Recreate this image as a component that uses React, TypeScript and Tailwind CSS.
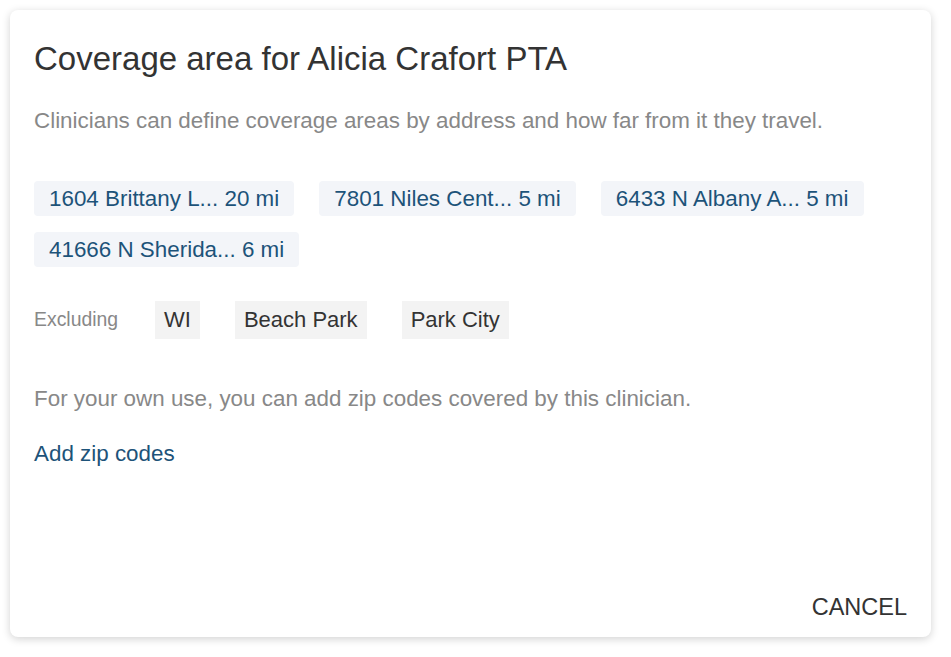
import React from "react";

const areas = [
  "1604 Brittany L... 20 mi",
  "7801 Niles Cent... 5 mi",
  "6433 N Albany A... 5 mi",
  "41666 N Sherida... 6 mi",
];

const excluded = ["WI", "Beach Park", "Park City"];

export default function App() {
  return (
    <div className="bg-white p-[10px] font-['Liberation_Sans',Arial,sans-serif]">
      <div className="flex h-[627px] w-[921px] flex-col rounded-lg bg-white px-6 shadow-[0_2px_8px_rgba(0,0,0,0.18)]">
        {/* Header */}
        <h2 className="mt-[30px] text-[33px] leading-[38px] text-[#333]">
          Coverage area for Alicia Crafort PTA
        </h2>
        <p className="mt-[29px] text-[22.4px] leading-[28px] text-[#888]">
          Clinicians can define coverage areas by address and how far from it they travel.
        </p>

        {/* Areas */}
        <div className="mt-[46px] flex w-[860px] flex-wrap gap-x-[25px] gap-y-[16px]">
          {areas.map((a) => (
            <span
              key={a}
              className="h-[35px] rounded-[4px] bg-[#f3f5f9] px-[15px] text-[22.4px] leading-[35px] text-[#1d5379]"
            >
              {a}
            </span>
          ))}
        </div>

        {/* Excluded */}
        <div className="mt-[34px] flex items-center">
          <span className="w-[121px] text-[19.4px] text-[#888]">Excluding</span>
          <div className="flex gap-[35px]">
            {excluded.map((e) => (
              <span
                key={e}
                className="h-[38px] bg-[#f3f3f3] px-[9px] text-[22px] leading-[38px] text-[#333]"
              >
                {e}
              </span>
            ))}
          </div>
        </div>

        <p className="mt-[46px] text-[22.4px] leading-[28px] text-[#888]">
          For your own use, you can add zip codes covered by this clinician.
        </p>
        <a className="mt-[27px] text-[22.4px] leading-[28px] text-[#1d5379]">Add zip codes</a>

        {/* Actions */}
        <div className="mt-auto mb-[16px] flex justify-end">
          <button className="text-[23.5px] leading-[28px] uppercase text-[#333]">Cancel</button>
        </div>
      </div>
    </div>
  );
}
